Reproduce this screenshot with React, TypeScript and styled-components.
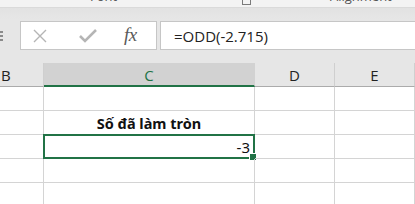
import React from 'react';
import styled, { createGlobalStyle } from 'styled-components';

const GlobalStyle = createGlobalStyle`
	html, body {
		margin: 0;
		padding: 0;
		background: #ffffff;
	}
	body {
		width: 415px;
		height: 204px;
		overflow: hidden;
		font-family: 'Open Sans', 'Noto Sans', sans-serif;
	}
`;

const Ribbon = styled.div`
	height: 7px;
	background: #f3f3f3;
	overflow: hidden;
	position: relative;
	border-bottom: 1px solid #dadada;
`;

// group captions of the ribbon, scrolled mostly out of view in the shot
const GroupLabel = styled.div<{ $left: number }>`
	position: absolute;
	left: ${(p) => p.$left}px;
	top: -12px;
	font-size: 13px;
	line-height: 16px;
	color: #555;
`;

const Launcher = styled.div`
	position: absolute;
	left: 242px;
	top: -4px;
	width: 7px;
	height: 7px;
	border: 1px solid #7a7a7a;
`;

const FormulaArea = styled.div`
	height: 55px;
	box-sizing: border-box;
	padding-top: 13px;
	background: linear-gradient(#e2e2e2, #e6e6e6 20%, #e6e6e6);
	display: flex;
	align-items: flex-start;
`;

const NameTail = styled.div`
	width: 20px;
	height: 29px;
	display: flex;
	flex-direction: column;
	justify-content: center;
	gap: 2px;
`;

const Dot = styled.div`
	width: 3px;
	height: 2px;
	background: #8a8a8a;
`;

const FxBox = styled.div`
	width: 137px;
	height: 29px;
	box-sizing: border-box;
	background: #ffffff;
	border: 1px solid #c6c6c6;
	display: flex;
	align-items: center;
	padding-left: 12px;
`;

const IconSlot = styled.div<{ $w: number }>`
	width: ${(p) => p.$w}px;
	display: flex;
	align-items: center;
`;

const FxText = styled.span`
	font-family: 'Liberation Serif', serif;
	font-style: italic;
	font-size: 19px;
	color: #5a5a5a;
	letter-spacing: -0.5px;
	margin-top: -1px;
`;

const InputBox = styled.div`
	margin-left: 3px;
	flex: 1;
	height: 29px;
	box-sizing: border-box;
	background: #ffffff;
	border: 1px solid #c6c6c6;
	border-right: none;
	display: flex;
	align-items: center;
	padding-left: 13px;
	font-size: 15px;
	color: #222;
`;

const Grid = styled.div`
	display: grid;
	grid-template-columns: 44px 211px 80px 80px;
	grid-auto-rows: 24px;
`;

const Header = styled.div<{ $selected?: boolean; $align?: string }>`
	box-sizing: border-box;
	background: ${(p) => (p.$selected ? '#d2d2d2' : '#e6e6e6')};
	border-right: 1px solid ${(p) => (p.$selected ? '#d2d2d2' : '#cfcfcf')};
	border-bottom: ${(p) => (p.$selected ? '2px solid #217346' : '1px solid #ababab')};
	color: ${(p) => (p.$selected ? '#217346' : '#222')};
	font-size: 15px;
	display: flex;
	align-items: center;
	justify-content: ${(p) => p.$align || 'center'};
	padding-left: ${(p) => (p.$align ? '1px' : '0')};
	padding-top: 1px;
`;

const Cell = styled.div<{ $align?: string; $bold?: boolean }>`
	box-sizing: border-box;
	position: relative;
	border-right: 1px solid #d4d4d4;
	border-bottom: 1px solid #d4d4d4;
	display: flex;
	align-items: center;
	justify-content: ${(p) => p.$align || 'flex-start'};
	padding: 0 4px;
	font-family: 'Noto Sans', 'Open Sans', sans-serif;
	font-size: ${(p) => (p.$bold ? '14.5px' : '15px')};
	font-weight: ${(p) => (p.$bold ? 700 : 400)};
	color: #111;
`;

const Selection = styled.div`
	position: absolute;
	left: -1px;
	top: -1px;
	right: -1px;
	bottom: -1px;
	border: 2px solid #217346;
	pointer-events: none;
`;

const FillHandle = styled.div`
	position: absolute;
	right: -4px;
	bottom: -4px;
	width: 6px;
	height: 6px;
	background: #217346;
	border: 1px solid #ffffff;
`;

const CancelIcon = () => (
	<svg width="14" height="14" viewBox="0 0 14 14">
		<path d="M1 1 L13 13 M13 1 L1 13" stroke="#b5b5b5" strokeWidth="1.4" fill="none" />
	</svg>
);

const CheckIcon = () => (
	<svg width="18" height="14" viewBox="0 0 18 14">
		<path d="M1 7 L6 12 L17 1" stroke="#b5b5b5" strokeWidth="2.6" fill="none" />
	</svg>
);

const rows = [
	['', '', '', ''],
	['', 'Số đã làm tròn', '', ''],
	['', '-3', '', ''],
	['', '', '', ''],
	['', '', '', ''],
];

const App = () => {
	return (
		<>
			<GlobalStyle />
			<Ribbon>
				<GroupLabel $left={90}>Font</GroupLabel>
				<Launcher />
				<GroupLabel $left={330}>Alignment</GroupLabel>
			</Ribbon>
			<FormulaArea>
				<NameTail>
					<Dot />
					<Dot />
					<Dot />
				</NameTail>
				<FxBox>
					<IconSlot $w={46}>
						<CancelIcon />
					</IconSlot>
					<IconSlot $w={45}>
						<CheckIcon />
					</IconSlot>
					<IconSlot $w={20}>
						<FxText>fx</FxText>
					</IconSlot>
				</FxBox>
				<InputBox>=ODD(-2.715)</InputBox>
			</FormulaArea>
			<Grid>
				<Header $align="flex-start">B</Header>
				<Header $selected>C</Header>
				<Header>D</Header>
				<Header>E</Header>
				{rows.map((row, r) =>
					row.map((value, c) => (
						<Cell
							key={`${r}-${c}`}
							$align={r === 1 ? 'center' : r === 2 ? 'flex-end' : undefined}
							$bold={r === 1}
						>
							{value}
							{r === 2 && c === 1 && (
								<Selection>
									<FillHandle />
								</Selection>
							)}
						</Cell>
					))
				)}
			</Grid>
		</>
	);
};

export default App;
